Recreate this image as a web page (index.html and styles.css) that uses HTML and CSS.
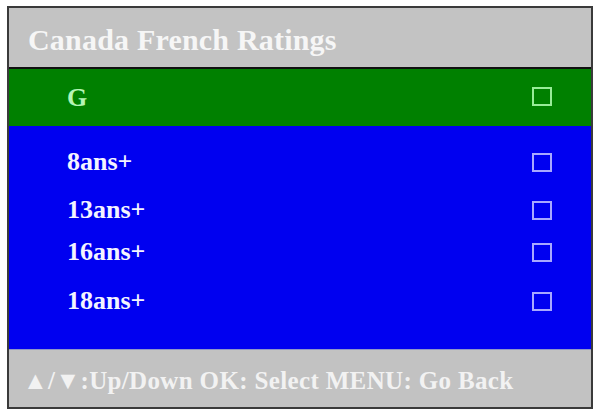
FILE: index.html
```html
<!DOCTYPE html>
<html>
<head>
<meta charset="utf-8">
<link rel="stylesheet" href="styles.css">
</head>
<body>
<div class="osd">
  <div class="osd-title">Canada French Ratings</div>
  <div class="row row-active">
    <span class="label">G</span>
    <span class="check"></span>
  </div>
  <div class="list">
    <div class="row"><span class="label">8ans+</span><span class="check"></span></div>
    <div class="row"><span class="label">13ans+</span><span class="check"></span></div>
    <div class="row"><span class="label">16ans+</span><span class="check"></span></div>
    <div class="row"><span class="label">18ans+</span><span class="check"></span></div>
  </div>
  <div class="osd-footer">▲/▼:Up/Down OK: Select MENU: Go Back</div>
</div>
</body>
</html>
```
FILE: styles.css
```css
html, body {
  margin: 0;
  padding: 0;
  background: #ffffff;
}
body {
  padding: 6px 0 0 7px;
  font-family: "Liberation Serif", "Times New Roman", serif;
  font-weight: bold;
}
.osd {
  width: 582px;
  height: 399px;
  border: 2px solid #3a3a3a;
  display: flex;
  flex-direction: column;
  background: #0000f0;
}
.osd-title {
  background: #c3c3c3;
  border-bottom: 2px solid #101010;
  color: #f6f6f6;
  font-size: 30px;
  letter-spacing: 0.2px;
  padding-left: 19px;
  display: flex;
  align-items: center;
  padding-top: 4px;
  box-sizing: border-box;
  height: 61px;
}
.row {
  display: flex;
  align-items: center;
  justify-content: space-between;
  padding: 0 39px 0 58px;
  color: #f4f4ff;
  font-size: 26px;
}
.row-active {
  height: 57px;
  background: #008000;
  color: #b4f5b4;
}
.check {
  width: 16px;
  height: 15px;
  border: 2px solid #a8a8ff;
}
.row-active .check {
  border-color: #98ec98;
  margin-top: -3px;
}
.list {
  height: 223px;
  display: grid;
  grid-template-rows: 48px 48px 36px 62px;
  padding-top: 12px;
  box-sizing: border-box;
  align-content: start;
}
.osd-footer {
  flex: 1;
  background: #c2c2c2;
  border-top: 1px solid #8e96c8;
  color: #f2f2f2;
  font-size: 25px;
  letter-spacing: 0.35px;
  padding-left: 14px;
  display: flex;
  align-items: center;
  padding-top: 4px;
}
```
